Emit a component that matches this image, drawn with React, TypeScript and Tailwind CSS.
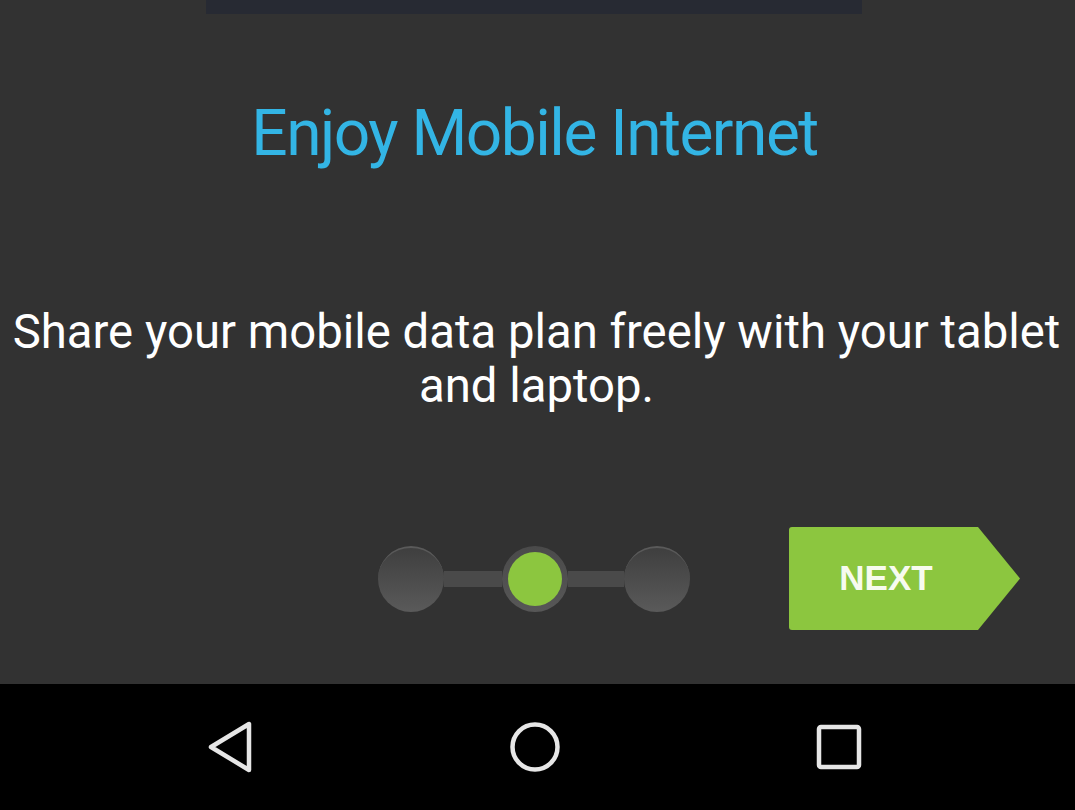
const Dot = ({ active }: { active?: boolean }) => {
  if (active) {
    return (
      <div className="flex h-[66px] w-[66px] items-center justify-center rounded-full bg-gradient-to-b from-[#4a4a4a] to-[#575757]">
        <div className="h-[54px] w-[54px] rounded-full bg-[#8cc63f]" />
      </div>
    );
  }
  return (
    <div className="h-[66px] w-[66px] rounded-full border-t-2 border-[#5a5a5a] bg-gradient-to-b from-[#3f3f3f] to-[#5a5a5a]" />
  );
};

const Pager = () => (
  <div className="flex flex-row items-center">
    <Dot />
    <div className="h-[16px] w-[58px] bg-[#4a4a4a]" />
    <Dot active />
    <div className="h-[16px] w-[56px] bg-[#4a4a4a]" />
    <Dot />
  </div>
);

const NextButton = () => (
  <div className="flex h-[103px] w-[231px] items-center rounded-l-[3px] bg-[#8cc63f] [clip-path:polygon(0_0,189px_0,100%_50%,189px_100%,0_100%)]">
    <span className="w-[194px] text-center font-['Liberation_Sans',Arial,sans-serif] text-[35px] font-bold text-[#f7fbef]">
      NEXT
    </span>
  </div>
);

const NavBar = () => (
  <div className="flex h-[126px] flex-row items-center bg-black">
    <div className="flex w-[463px] justify-end pr-[209px]">
      <svg width="48" height="54" viewBox="0 0 48 54" fill="none">
        <path d="M43 4 L43 50 L5 27 Z" stroke="#e6e6e6" strokeWidth="4.5" strokeLinejoin="round" />
      </svg>
    </div>
    <div className="flex w-[145px] justify-center">
      <svg width="54" height="54" viewBox="0 0 54 54" fill="none">
        <circle cx="26" cy="27" r="22.5" stroke="#e6e6e6" strokeWidth="4.5" />
      </svg>
    </div>
    <div className="flex flex-1 pl-[207px]">
      <svg width="48" height="48" viewBox="0 0 48 48" fill="none">
        <rect x="4" y="4" width="40" height="40" rx="2" stroke="#e6e6e6" strokeWidth="4.5" />
      </svg>
    </div>
  </div>
);

export default function App() {
  return (
    <div className="flex h-[810px] w-[1075px] flex-col bg-[#323232] font-['Roboto','Noto_Sans',sans-serif]">
      <div className="flex flex-1 flex-col items-center">
        <div className="ml-[206px] h-[14px] w-[656px] self-start bg-[#272a33]" />
        <h1 className="mt-[87px] pr-[6px] text-[64px] leading-[66px] font-normal tracking-[-1.5px] text-[#33b5e5]">
          Enjoy Mobile Internet
        </h1>
        <p className="mt-[138px] w-full pr-[2px] text-center text-[47.3px] leading-[54px] text-white">
          Share your mobile data plan freely with your tablet
          <br />
          and laptop.
        </p>
        <div className="mt-[114px] flex w-full flex-row items-center pl-[378px]">
          <Pager />
          <div className="ml-[99px]">
            <NextButton />
          </div>
        </div>
      </div>
      <NavBar />
    </div>
  );
}
